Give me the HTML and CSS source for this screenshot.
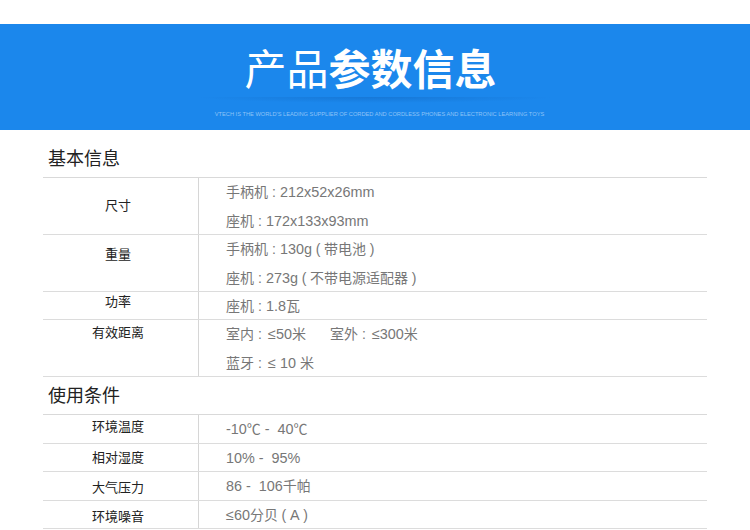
FILE: index.html
```html
<!DOCTYPE html>
<html lang="zh">
<head>
<meta charset="utf-8">
<title>产品参数信息</title>
<link rel="stylesheet" href="styles.css">
</head>
<body>
<header class="banner">
  <h1 class="banner-title"><span class="thin">产品</span><span class="bold">参数信息</span></h1>
  <div class="banner-shadow"></div>
  <p class="banner-sub">VTECH IS THE WORLD'S LEADING SUPPLIER OF CORDED AND CORDLESS PHONES AND ELECTRONIC LEARNING TOYS</p>
</header>
<main class="content">
  <h2 class="section first">基本信息</h2>
  <div class="table">
    <div class="row tall"><div class="label l-center">尺寸</div><div class="values"><p>手柄机<span class="colon">:</span><span class="num">212x52x26mm</span></p><p>座机<span class="colon">:</span><span class="num">172x133x93mm</span></p></div></div>
    <div class="row tall"><div class="label l-weight">重量</div><div class="values"><p>手柄机<span class="colon">:</span><span class="num">130g</span><span class="paren">(</span>带电池<span class="paren">)</span></p><p>座机<span class="colon">:</span><span class="num">273g</span><span class="paren">(</span>不带电源适配器<span class="paren">)</span></p></div></div>
    <div class="row short"><div class="label l-power">功率</div><div class="values"><p>座机<span class="colon">:</span><span class="num">1.8</span>瓦</p></div></div>
    <div class="row tall"><div class="label l-range">有效距离</div><div class="values"><p>室内<span class="colon">:</span><span class="num le">≤50</span>米<span class="gap"></span>室外<span class="colon">:</span><span class="num le">≤300</span>米</p><p>蓝牙<span class="colon">:</span><span class="num le">≤ 10 </span>米</p></div></div>
  </div>
  <h2 class="section second">使用条件</h2>
  <div class="table">
    <div class="row cond"><div class="label l-temp">环境温度</div><div class="values"><p><span class="num">-10</span>℃<span class="num"> -&nbsp; 40</span>℃</p></div></div>
    <div class="row cond"><div class="label l-humid">相对湿度</div><div class="values"><p><span class="num">10% -&nbsp; 95%</span></p></div></div>
    <div class="row cond"><div class="label l-mid">大气压力</div><div class="values"><p><span class="num">86 -&nbsp; 106</span>千帕</p></div></div>
    <div class="row cond"><div class="label l-mid">环境噪音</div><div class="values"><p><span class="num">≤60</span>分贝<span class="paren">(</span><span class="num">A</span><span class="paren">)</span></p></div></div>
  </div>
</main>
</body>
</html>
```
FILE: styles.css
```css
* { box-sizing: border-box; }
html, body { margin: 0; padding: 0; }
body {
  width: 750px;
  height: 530px;
  overflow: hidden;
  background: #fff;
  font-family: "Liberation Sans", "Noto Sans CJK SC", sans-serif;
  padding-top: 24px;
}
.banner {
  height: 106px;
  background: #1b87ec;
  display: flex;
  flex-direction: column;
  align-items: center;
  color: #fff;
  padding-top: 13px;
}
.banner-title {
  margin: 0 9px 0 0;
  font-family: "Noto Sans CJK SC", sans-serif;
  font-size: 42px;
  line-height: 60px;
  height: 60px;
  font-weight: 400;
  white-space: nowrap;
}
.thin { font-weight: 400; }
.bold { font-weight: 700; }
.banner-shadow {
  width: 360px;
  height: 6px;
  background: radial-gradient(ellipse at center top, rgba(10, 80, 160, .28), rgba(10, 80, 160, 0) 70%);
}
.banner-sub {
  margin: 7px 0 0;
  padding-left: 9px;
  font-size: 5.7px;
  line-height: 9px;
  color: #8fc3f7;
  white-space: nowrap;
}
.content { padding: 0 43px; }
.section {
  margin: 0;
  height: 37px;
  padding: 0 0 0 5px;
  font-family: "Noto Sans CJK SC", sans-serif;
  font-size: 18px;
  font-weight: 400;
  line-height: 33px;
  color: #222;
}
.section.first { height: 47px; padding-top: 11px; }
.section.second { padding-top: 1px; }
.table { border-top: 1px solid #d9d9d9; }
.row {
  display: flex;
  border-bottom: 1px solid #dcdcdc;
}
.row.tall { height: 57px; }
.row.short { height: 28px; }
.row.cond { height: 28.5px; }
.row.cond .values p { line-height: 29px; }
.label {
  width: 156px;
  border-right: 1px solid #d6d6d6;
  padding-right: 5px;
  text-align: center;
  font-family: "Noto Sans CJK SC", sans-serif;
  font-size: 13px;
  line-height: 18px;
  color: #222;
}
.l-center { padding-top: 18px; }
.l-weight { padding-top: 10px; }
.l-power { padding-top: 0; }
.l-range { padding-top: 3px; }
.l-temp { padding-top: 2px; }
.l-humid { padding-top: 4px; }
.l-mid { padding-top: 6px; }
.values {
  padding-left: 27px;
  font-size: 14px;
  color: #777;
}
.values p {
  margin: 0;
  height: 28.5px;
  line-height: 28px;
  white-space: nowrap;
}
.num { font-size: 14.4px; white-space: pre-wrap; }
.le { margin-left: 2px; }
.colon {
  display: inline-block;
  width: 12px;
  text-align: center;
}
.paren {
  display: inline-block;
  width: 12px;
  text-align: center;
}
.gap { display: inline-block; width: 24px; }
```
